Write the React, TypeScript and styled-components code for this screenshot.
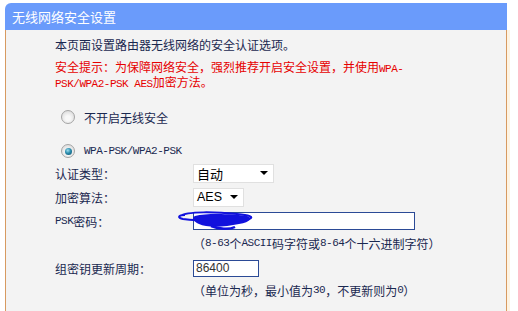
import styled, { createGlobalStyle } from 'styled-components';

const GlobalStyle = createGlobalStyle`
  html, body {
    margin: 0;
    padding: 0;
    background: #fff;
  }
  body {
    font-family: 'Noto Sans CJK SC', 'Liberation Sans', sans-serif;
    font-size: 12px;
    color: #1a2850;
    overflow: hidden;
  }
`;

const Page = styled.div`
  padding: 3px 0 0 5px;
  width: 502px;
`;

const TitleBar = styled.div`
  height: 27px;
  background: #6a9bfb;
  border-top-left-radius: 6px;
  color: #fff;
  font-size: 13px;
  line-height: 27px;
  padding-left: 7px;
`;

const Body = styled.div`
  background: #f3f3f3;
  border-left: 1px solid #d79a60;
  border-right: 1px solid #d79a60;
  box-shadow: 3px 0 0 #fdf3e2;
  padding: 7px 0 12px 49px;
  height: 281px;
  box-sizing: border-box;
`;

const Intro = styled.p`
  margin: 0;
  line-height: 16px;
`;

const Warning = styled.p`
  margin: 7px 0 0;
  line-height: 14px;
  color: #e60000;
`;

const Mono = styled.span`
  font-family: 'Liberation Mono', 'Noto Sans CJK SC', monospace;
  font-size: 11px;
  letter-spacing: -0.5px;
  line-height: 1;
`;

const RadioRow = styled.label<{ $first?: boolean }>`
  display: flex;
  align-items: center;
  gap: 9px;
  height: 20px;
  margin-top: ${(p) => (p.$first ? '17px' : '14px')};
  padding-left: 6px;
`;

const Radio = styled.span<{ $checked?: boolean }>`
  width: 12px;
  height: 12px;
  border-radius: 50%;
  border: 1px solid #a4a4a4;
  background: radial-gradient(circle at 50% 60%, #f8f8f8 25%, #d2d2d2 100%);
  display: flex;
  align-items: center;
  justify-content: center;

  &::after {
    content: '';
    display: ${(p) => (p.$checked ? 'block' : 'none')};
    width: 7px;
    height: 7px;
    border-radius: 50%;
    background: radial-gradient(circle at 40% 35%, #9fe0f0 0%, #2a8cad 45%, #0c4a66 100%);
  }
`;

const Form = styled.div`
  display: grid;
  grid-template-columns: 138px 1fr;
`;

const Label = styled.div<{ $gap?: number }>`
  height: 24px;
  margin-top: ${(p) => p.$gap ?? 0}px;
  display: flex;
  align-items: center;
`;

const Cell = styled.div<{ $gap?: number }>`
  height: 24px;
  margin-top: ${(p) => p.$gap ?? 0}px;
  display: flex;
  align-items: center;
  position: relative;
`;

const Select = styled.div<{ $w: number }>`
  width: ${(p) => p.$w}px;
  height: 19px;
  box-sizing: border-box;
  border: 1px solid #e0e0e0;
  background: #fff;
  display: flex;
  align-items: center;
  justify-content: space-between;
  padding: 0 5px 0 3px;
  font-size: 13px;
  color: #000;

  &::after {
    content: '';
    border-left: 4px solid transparent;
    border-right: 4px solid transparent;
    border-top: 4px solid #000;
  }
`;

const Latin = styled.span`
  font-family: 'Liberation Sans', sans-serif;
  font-size: 12.5px;
`;

const TextBox = styled.div<{ $w: number; $h: number }>`
  width: ${(p) => p.$w}px;
  height: ${(p) => p.$h}px;
  box-sizing: border-box;
  border: 1px solid #2b4a96;
  background: #fff;
  display: flex;
  align-items: center;
  padding-left: 2px;
  font-family: 'Liberation Sans', sans-serif;
  font-size: 12px;
  color: #333;
`;

const Hint = styled.div`
  grid-column: 2;
  height: 20px;
  display: flex;
  align-items: center;
`;

const Scribble = styled.svg`
  position: absolute;
  left: -16px;
  top: 1px;
`;

export default function App() {
  return (
    <>
      <GlobalStyle />
      <Page>
        <TitleBar>无线网络安全设置</TitleBar>
        <Body>
          <Intro>本页面设置路由器无线网络的安全认证选项。</Intro>
          <Warning>
            安全提示：为保障网络安全，强烈推荐开启安全设置，并使用<Mono>WPA-</Mono>
            <br />
            <Mono>PSK/WPA2-PSK AES</Mono>加密方法。
          </Warning>
          <RadioRow $first>
            <Radio />
            不开启无线安全
          </RadioRow>
          <RadioRow>
            <Radio $checked />
            <Mono>WPA-PSK/WPA2-PSK</Mono>
          </RadioRow>
          <Form>
            <Label>认证类型：</Label>
            <Cell>
              <Select $w={81}>自动</Select>
            </Cell>
            <Label>加密算法：</Label>
            <Cell>
              <Select $w={51}>
                <Latin>AES</Latin>
              </Select>
            </Cell>
            <Label>
              <Mono>PSK</Mono>密码：
            </Label>
            <Cell>
              <TextBox $w={222} $h={18} />
              <Scribble width="80" height="22" viewBox="0 0 80 22">
                <path
                  d="M3 6 C 10 1, 40 2, 60 4 C 72 5, 78 7, 72 9 C 60 12, 20 11, 6 9 C 0 8, 1 5, 8 5"
                  fill="none"
                  stroke="#1111dd"
                  strokeWidth="2"
                />
                <path
                  d="M18 6 C 30 3, 55 4, 70 6 C 76 8, 74 12, 62 14 C 48 17, 30 18, 22 14 C 16 11, 14 8, 18 6 Z"
                  fill="#1111dd"
                />
                <path d="M34 16 C 42 19, 52 20, 58 17" fill="none" stroke="#1111dd" strokeWidth="2.5" />
              </Scribble>
            </Cell>
            <Hint>
              （<Mono>8-63</Mono>个<Mono>ASCII</Mono>码字符或<Mono>8-64</Mono>个十六进制字符）
            </Hint>
            <Label $gap={3}>组密钥更新周期：</Label>
            <Cell $gap={3}>
              <TextBox $w={66} $h={17}>86400</TextBox>
            </Cell>
            <Hint>
              （单位为秒，最小值为<Mono>30</Mono>，不更新则为<Mono>0</Mono>）
            </Hint>
          </Form>
        </Body>
      </Page>
    </>
  );
}
